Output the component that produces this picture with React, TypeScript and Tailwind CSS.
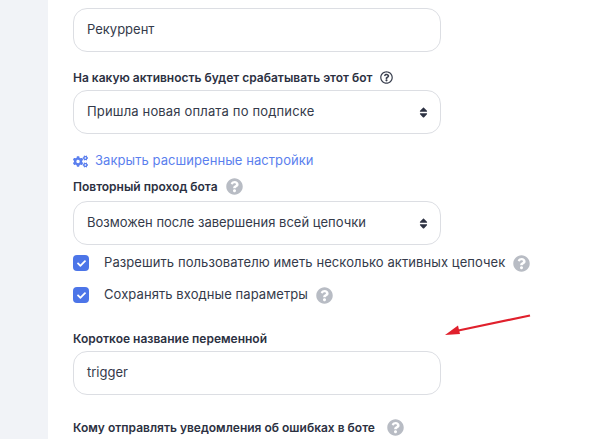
import { FaCheck, FaCogs, FaQuestionCircle, FaRegQuestionCircle, FaSort } from "react-icons/fa";

function Hint() {
  return <FaQuestionCircle className="h-[17px] w-[17px] shrink-0 text-[#b8bcc4]" />;
}

function Label({ children }: { children: React.ReactNode }) {
  return <div className="flex h-[17px] items-center text-xs font-semibold leading-[17px] text-[#2c3142]">{children}</div>;
}

function Field({ children }: { children: React.ReactNode }) {
  return (
    <div className="flex h-11 w-[368px] items-center justify-between rounded-[14px] border border-[#dcdee3] bg-white pr-[10px] pl-[13px] text-[13px] text-[#343a4a]">
      {children}
    </div>
  );
}

function CheckRow({ children }: { children: React.ReactNode }) {
  return (
    <div className="flex h-[18px] items-center">
      <span className="flex h-4 w-4 items-center justify-center rounded-[4px] bg-[#4c75e8]">
        <FaCheck className="h-[9px] w-[9px] text-white" />
      </span>
      <span className="ml-[15px] text-[13px] tracking-[0.08px] text-[#343a4a]">{children}</span>
    </div>
  );
}

export default function App() {
  return (
    <div className="relative flex h-[439px] w-[607px] overflow-hidden bg-white font-['Inter',sans-serif]">
      <div className="w-12 shrink-0 bg-[#f1f3f7]" />
      <div className="flex flex-col pt-2 pl-[25px]">
        <Field>Рекуррент</Field>

        <div className="mt-[17px]">
          <Label>
            На какую активность будет срабатывать этот бот
            <FaRegQuestionCircle className="ml-[7px] h-[13px] w-[13px] text-[#3b4150]" />
          </Label>
        </div>
        <div className="mt-[4px]">
          <Field>
            <span className="tracking-[0.16px]">Пришла новая оплата по подписке</span>
            <FaSort className="h-[13px] w-[13px] text-[#2c3142]" />
          </Field>
        </div>

        <div className="mt-[18px] flex h-[18px] items-center text-[13px] tracking-[0.06px] text-[#5b7fee]">
          <FaCogs className="h-[15px] w-[15px]" />
          <span className="ml-[7px]">Закрыть расширенные настройки</span>
        </div>

        <div className="mt-[8px]">
          <Label>
            Повторный проход бота
            <span className="ml-2">
              <Hint />
            </span>
          </Label>
        </div>
        <div className="mt-[6px]">
          <Field>
            Возможен после завершения всей цепочки
            <FaSort className="h-[13px] w-[13px] text-[#2c3142]" />
          </Field>
        </div>

        <div className="mt-[9px] flex flex-col gap-[14px]">
          <CheckRow>
            <span className="flex items-center gap-2">
              Разрешить пользователю иметь несколько активных цепочек
              <Hint />
            </span>
          </CheckRow>
          <CheckRow>
            <span className="flex items-center gap-2">
              Сохранять входные параметры
              <Hint />
            </span>
          </CheckRow>
        </div>

        <div className="mt-[26px]">
          <Label>Короткое название переменной</Label>
        </div>
        <div className="mt-[4px]">
          <Field>trigger</Field>
        </div>

        <div className="mt-[24px]">
          <Label>
            Кому отправлять уведомления об ошибках в боте
            <span className="ml-[12px]">
              <Hint />
            </span>
          </Label>
        </div>
      </div>

      {/* annotation arrow drawn over the form */}
      <svg className="absolute top-[310px] left-[440px]" width="96" height="30" viewBox="0 0 96 30">
        <path d="M90 5.5 L16 21" stroke="#e0202c" strokeWidth="2.2" fill="none" />
        <path d="M5 25 L18 15.5 L20 24 Z" fill="#e0202c" />
      </svg>
    </div>
  );
}
